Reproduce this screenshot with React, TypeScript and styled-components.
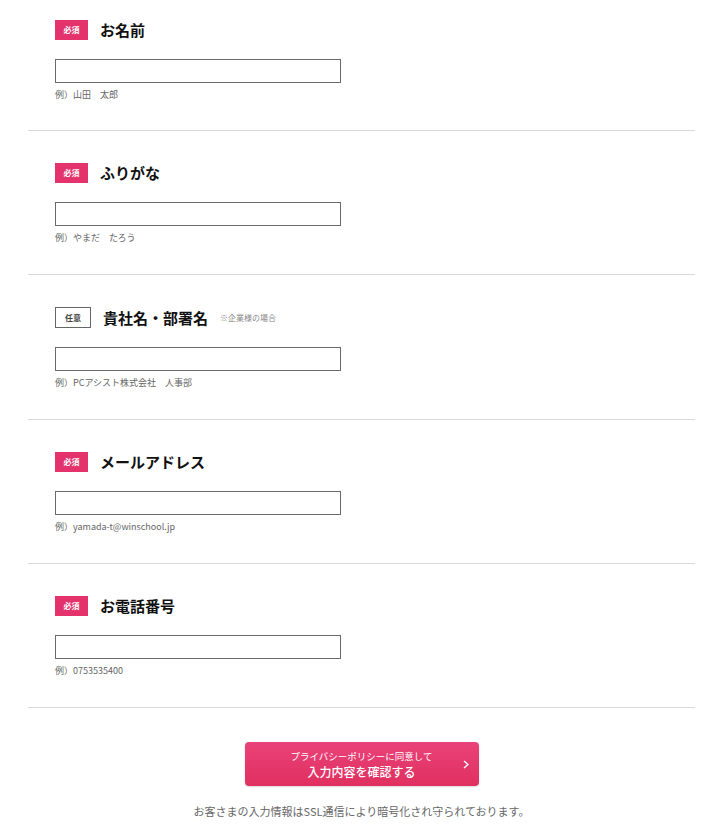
import styled, { createGlobalStyle } from "styled-components";

const GlobalStyle = createGlobalStyle`
  html, body {
    margin: 0;
    padding: 0;
    background: #fff;
  }
  body {
    font-family: "Noto Sans CJK JP", "Noto Sans", sans-serif;
    color: #222;
  }
  * {
    box-sizing: border-box;
  }
`;

const Page = styled.div`
  width: 720px;
  padding: 0 25px 0 28px;
`;

const Form = styled.form`
  display: flex;
  flex-direction: column;
`;

const Section = styled.section<{ $first?: boolean }>`
  display: flex;
  flex-direction: column;
  padding: ${(p) => (p.$first ? "20px" : "32px")} 27px ${(p) => (p.$first ? "29px" : "30px")};
  border-bottom: 1px solid #d9d9d9;
`;

const Header = styled.div`
  display: flex;
  align-items: center;
  gap: 12px;
  margin-bottom: 19px;
`;

const Badge = styled.span<{ $optional?: boolean }>`
  display: flex;
  justify-content: center;
  align-items: center;
  width: ${(p) => (p.$optional ? "36px" : "33px")};
  height: ${(p) => (p.$optional ? "21px" : "20px")};
  font-size: 8px;
  font-weight: bold;
  line-height: 1;
  color: ${(p) => (p.$optional ? "#444" : "#fff")};
  background-color: ${(p) => (p.$optional ? "#fff" : "#e4336c")};
  border: ${(p) => (p.$optional ? "1px solid #666" : "none")};
`;

const Title = styled.h2`
  margin: 0;
  font-size: 15px;
  font-weight: bold;
  line-height: 20px;
  color: #111;
`;

const Note = styled.span`
  font-size: 8px;
  color: #888;
`;

const Input = styled.input`
  width: 286px;
  height: 24px;
  padding: 0 6px;
  border: 1px solid #6a6a6a;
  border-radius: 0;
  outline: none;
  font-size: 12px;
`;

const Hint = styled.p`
  margin: 6px 0 0;
  font-size: 9px;
  line-height: 12px;
  color: #666;
`;

const Footer = styled.div`
  display: flex;
  flex-direction: column;
  align-items: center;
  padding-top: 34px;
`;

const SubmitButton = styled.button`
  position: relative;
  display: flex;
  flex-direction: column;
  justify-content: center;
  align-items: center;
  width: 234px;
  height: 44px;
  padding: 0;
  border: none;
  border-radius: 4px;
  background: linear-gradient(#e9427a, #e0305f);
  box-shadow: 0 1px 2px rgba(0, 0, 0, 0.15);
  color: #fff;
  font-family: inherit;
  cursor: pointer;
  .sub {
    font-size: 9.5px;
    line-height: 14px;
  }
  .main {
    font-size: 12px;
    font-weight: 500;
    line-height: 17px;
  }
  svg {
    position: absolute;
    right: 10px;
    top: 18px;
  }
`;

const Secure = styled.p`
  margin: 17px 0 0;
  font-size: 11px;
  color: #666;
`;

interface iField {
  label: string;
  hint: string;
  optional?: boolean;
  note?: string;
  type?: string;
}

const fields: iField[] = [
  { label: "お名前", hint: "例）山田　太郎" },
  { label: "ふりがな", hint: "例）やまだ　たろう" },
  {
    label: "貴社名・部署名",
    hint: "例）PCアシスト株式会社　人事部",
    optional: true,
    note: "※企業様の場合",
  },
  { label: "メールアドレス", hint: "例）yamada-t@winschool.jp", type: "email" },
  { label: "お電話番号", hint: "例）0753535400", type: "tel" },
];

function App() {
  return (
    <Page>
      <GlobalStyle />
      <Form onSubmit={(e) => e.preventDefault()}>
        {fields.map((f, i) => (
          <Section key={f.label} $first={i === 0}>
            <Header>
              <Badge $optional={f.optional}>{f.optional ? "任意" : "必須"}</Badge>
              <Title>{f.label}</Title>
              {f.note && <Note>{f.note}</Note>}
            </Header>
            <Input type={f.type || "text"} />
            <Hint>{f.hint}</Hint>
          </Section>
        ))}
        <Footer>
          <SubmitButton type="submit">
            <span className="sub">プライバシーポリシーに同意して</span>
            <span className="main">入力内容を確認する</span>
            <svg width="6" height="9" viewBox="0 0 6 9" fill="none">
              <polyline points="1,1 5,4.5 1,8" stroke="#fff" strokeWidth="1.4" />
            </svg>
          </SubmitButton>
          <Secure>お客さまの入力情報はSSL通信により暗号化され守られております。</Secure>
        </Footer>
      </Form>
    </Page>
  );
}

export default App;
